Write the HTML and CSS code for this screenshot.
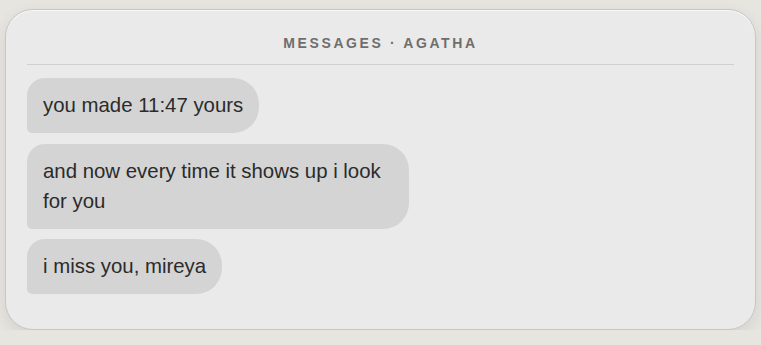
FILE: index.html
```html
<!DOCTYPE html>
<html>
<head>
<meta charset="utf-8">
<link rel="stylesheet" href="styles.css">
</head>
<body>
<div class="card">
  <div class="header">MESSAGES · AGATHA</div>
  <div class="thread">
    <div class="bubble">you made 11:47 yours</div>
    <div class="bubble">and now every time it shows up i look for you</div>
    <div class="bubble">i miss you, mireya</div>
  </div>
</div>
</body>
</html>
```
FILE: styles.css
```css
html, body {
  margin: 0;
  padding: 0;
}
body {
  background: #e7e5e0;
  padding: 9px 5px 0 5px;
  font-family: "Liberation Sans", Arial, sans-serif;
}
.card {
  box-sizing: border-box;
  width: 751px;
  height: 321px;
  background: #eaeaea;
  border: 1px solid #c6c6c6;
  border-radius: 28px;
  box-shadow: inset 0 1px 0 #fafafa, 0 5px 16px rgba(0, 0, 0, 0.09);
  padding: 0 21px;
}
.header {
  text-align: center;
  font-size: 14px;
  font-weight: bold;
  letter-spacing: 2.6px;
  color: #6e6e6e;
  padding: 25px 0 12px;
  border-bottom: 1px solid #cfcfcf;
  line-height: 17px;
}
.thread {
  display: flex;
  flex-direction: column;
  align-items: flex-start;
  gap: 10px;
  padding-top: 13px;
}
.bubble {
  background: #d4d4d4;
  color: #2b2b2b;
  font-size: 20.4px;
  line-height: 30px;
  padding: 12px 16px 13px;
  max-width: 382px;
  min-height: 55px;
  box-sizing: border-box;
  border-radius: 18px 26px 26px 5px;
}
.bubble:first-child {
  margin-bottom: 1px;
}
```
